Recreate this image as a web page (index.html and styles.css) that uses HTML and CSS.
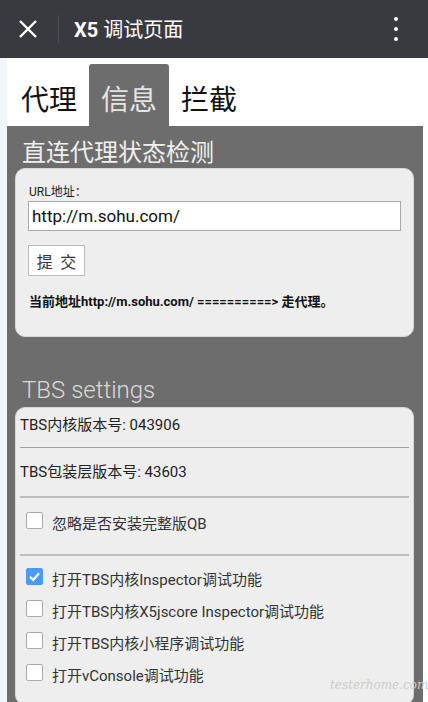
FILE: index.html
```html
<!DOCTYPE html>
<html lang="zh-CN">
<head>
  <meta charset="UTF-8">
  <meta name="viewport" content="width=device-width, initial-scale=1.0">
  <title>X5 调试页面</title>
  <link rel="stylesheet" href="styles.css">
</head>
<body>

  <!-- Top Bar -->
  <div class="topbar">
    <div class="close-btn">
      <svg width="18" height="18" viewBox="0 0 18 18">
        <path d="M1 1 L17 17 M17 1 L1 17" stroke="#fff" stroke-width="2.4" fill="none"/>
      </svg>
    </div>
    <div class="divider"></div>
    <div class="title"><b>X5</b> 调试页面</div>
    <div class="more">
      <span></span><span></span><span></span>
    </div>
  </div>

  <div class="page">
    <!-- Tabs -->
    <div class="tabs">
      <div class="tab">代理</div>
      <div class="tab active">信息</div>
      <div class="tab">拦截</div>
    </div>

    <!-- Panel -->
    <div class="panel">
      <h2 class="panel-title">直连代理状态检测</h2>
      <div class="card proxy-card">
        <label class="small-label">URL地址：</label>
        <input class="url-input" type="text" value="http://m.sohu.com/">
        <button class="submit-btn">提&nbsp;交</button>
        <p class="status">当前地址http://m.sohu.com/ ==========&gt; 走代理。</p>
      </div>

      <h2 class="panel-title light">TBS settings</h2>
      <div class="card settings-card">
        <div class="info-row first">TBS内核版本号: 043906</div>
        <div class="sep"></div>
        <div class="info-row">TBS包装层版本号: 43603</div>
        <div class="sep light"></div>
        <div class="check-group single">
          <div class="check-row"><span class="box"></span>忽略是否安装完整版QB</div>
        </div>
        <div class="sep light"></div>
        <div class="check-group">
          <div class="check-row">
            <span class="box checked">
              <svg width="17" height="17" viewBox="0 0 17 17"><path d="M4 8.8 L7.2 12 L13 5.2" stroke="#fff" stroke-width="2.2" fill="none"/></svg>
            </span>打开TBS内核Inspector调试功能
          </div>
          <div class="check-row"><span class="box"></span>打开TBS内核X5jscore Inspector调试功能</div>
          <div class="check-row"><span class="box"></span>打开TBS内核小程序调试功能</div>
          <div class="check-row"><span class="box"></span>打开vConsole调试功能</div>
        </div>
        <div class="sep light"></div>
      </div>
    </div>
  </div>

  <div class="watermark">testerhome.com</div>

</body>
</html>
```

FILE: styles.css
```css
/* Basic Reset */
* {
  margin: 0;
  padding: 0;
  box-sizing: border-box;
}

body {
  font-family: Roboto, "Noto Sans CJK SC", sans-serif;
  background-color: #f2f5fa;
  color: #222;
  height: 702px;
  overflow: hidden;
}

/* Top bar */
.topbar {
  height: 58px;
  background-color: #393a3f;
  color: #fff;
  display: flex;
  align-items: center;
}

.close-btn {
  width: 58px;
  display: flex;
  justify-content: center;
  padding-right: 2px;
}

.close-btn svg {
  display: block;
}

.divider {
  width: 1px;
  height: 28px;
  background-color: #4e4f54;
}

.title {
  flex: 1;
  padding-left: 15px;
  font-size: 20px;
  font-family: Roboto, "Noto Sans CJK SC", sans-serif;
  padding-bottom: 2px;
}

.title b {
  font-weight: 700;
}

.more {
  width: 60px;
  display: flex;
  flex-direction: column;
  align-items: center;
  gap: 6px;
  padding-right: 4px;
}

.more span {
  width: 4px;
  height: 4px;
  border-radius: 50%;
  background-color: #fff;
}

/* Page */
.page {
  margin-left: 7px;
  background-color: #fff;
  height: 644px;
}

.tabs {
  display: flex;
  padding-top: 6px;
  padding-left: 2px;
}

.tab {
  height: 62px;
  padding: 12px 12px 0;
  font-size: 28px;
  line-height: 44px;
  color: #111;
  font-family: "Noto Sans CJK SC", sans-serif;
}

.tab.active {
  background-color: #6d6d6d;
  color: #e4e4e4;
  border-radius: 3px 3px 0 0;
}

/* Panel */
.panel {
  background-color: #6d6d6d;
  margin-right: 5px;
  padding: 0 9px 0 8px;
  height: 576px;
}

.panel-title {
  font-family: "Noto Sans CJK SC", sans-serif;
  font-weight: 400;
  font-size: 24px;
  line-height: 32px;
  color: #efefef;
  padding: 9px 0 1px 7px;
}

.panel-title.light {
  font-family: Roboto, sans-serif;
  font-weight: 300;
  color: #dadada;
  padding-top: 37px;
  padding-bottom: 0;
}

.card {
  background-color: #eeeeee;
  border-radius: 10px;
  border: 1px solid #d8d8d8;
}

.proxy-card {
  padding: 15px 13px 24px 12px;
}

.small-label {
  display: block;
  font-size: 12px;
  line-height: 17px;
  color: #222;
  padding-left: 1px;
  font-family: Roboto, "Noto Sans CJK SC", sans-serif;
}

.url-input {
  display: block;
  width: 373px;
  height: 30px;
  border: 1px solid #aaa;
  background-color: #fff;
  padding: 0 3px;
  font-family: Roboto, sans-serif;
  font-size: 17px;
  color: #111;
}

.submit-btn {
  margin-top: 14px;
  width: 57px;
  height: 31px;
  background-color: #fff;
  border: 1px solid #bbb;
  font-family: "Noto Sans CJK SC", sans-serif;
  font-size: 16px;
  letter-spacing: 2px;
  padding-left: 2px;
  color: #333;
}

.status {
  margin-top: 16px;
  padding-left: 1px;
  font-size: 13px;
  line-height: 20px;
  font-weight: 700;
  color: #111;
}

/* Settings card */
.settings-card {
  margin-top: 1px;
  padding: 0 4px;
}

.info-row {
  font-size: 15px;
  line-height: 24px;
  padding: 12px 0;
  color: #222;
}

.info-row.first {
  padding: 5px 0 10px;
}

.sep {
  height: 1px;
  background-color: #a0a0a0;
}

.sep.light {
  height: 2px;
  background-color: #bdbdbd;
}

.check-group {
  padding: 8px 0 10px 6px;
}

.check-group.single {
  padding: 10px 0 14px 6px;
}

.check-row {
  display: flex;
  align-items: flex-start;
  height: 32px;
  line-height: 32px;
  font-size: 15px;
  color: #333;
}

.box {
  width: 17px;
  height: 17px;
  margin-top: 4px;
  margin-right: 9px;
  border: 1px solid #aaa;
  border-radius: 2px;
  background-color: #fff;
  flex-shrink: 0;
}

.box.checked {
  background-color: #4a9bf5;
  border-color: #4a9bf5;
  position: relative;
}

.box.checked svg {
  position: absolute;
  left: -1px;
  top: -1px;
}

/* Watermark */
.watermark {
  position: absolute;
  left: 330px;
  top: 678px;
  font-family: "DejaVu Serif", serif;
  font-style: italic;
  font-size: 12px;
  color: #cccccc;
}
```
